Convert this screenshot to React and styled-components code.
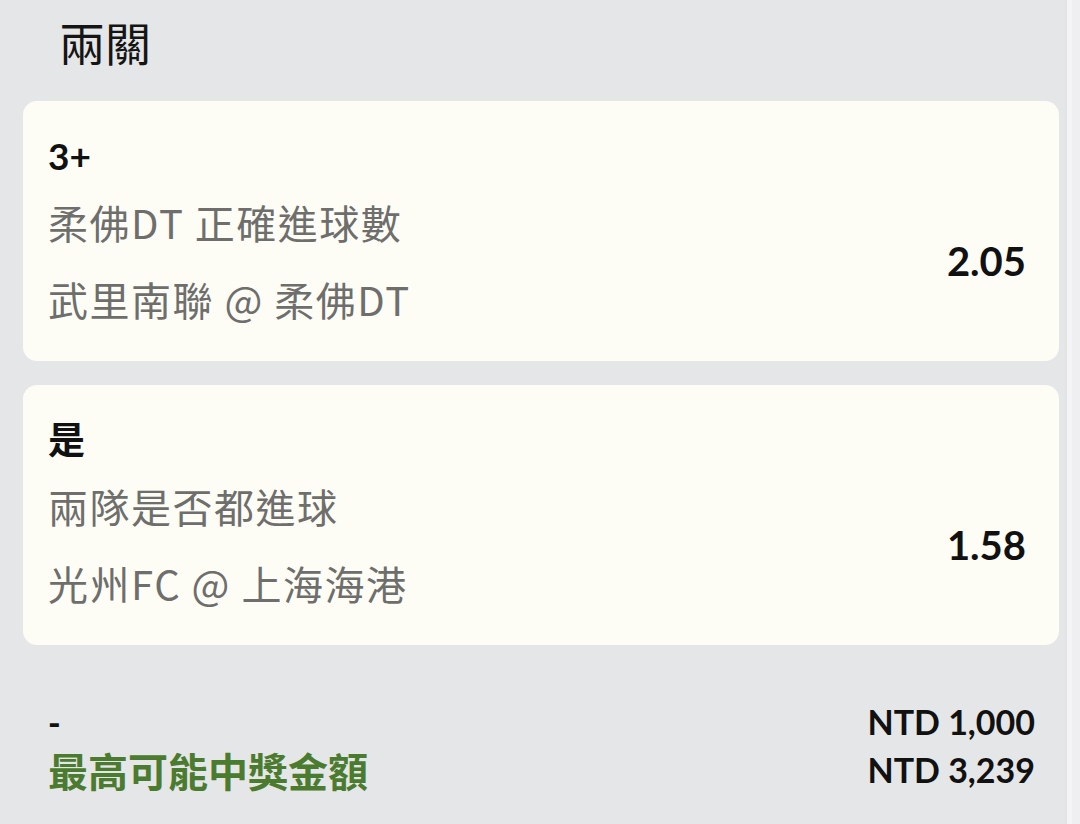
import React from "react";
import styled, { createGlobalStyle } from "styled-components";

const Global = createGlobalStyle`
  html, body { margin: 0; padding: 0; background: #e5e6e8; }
  body { font-family: Lato, "Noto Sans CJK TC", sans-serif; }
`;

const Page = styled.div`
  display: flex;
  width: 1080px;
  height: 824px;
  overflow: hidden;
  background: #e5e6e8;
`;

const Main = styled.div`
  flex: 1;
  display: flex;
  flex-direction: column;
  padding: 0 6px 0 23px;
`;

const Track = styled.div`
  width: 15px;
  flex-shrink: 0;
  background: linear-gradient(90deg, #e2e3e5 0 2px, #f4f4f6 2px 7px, #efeff1 7px);
`;

const Title = styled.h1`
  margin: 0;
  padding: 13px 0 0 36px;
  height: 101px;
  box-sizing: border-box;
  font-family: "Noto Sans CJK TC", sans-serif;
  font-weight: 400;
  font-size: 46px;
  line-height: 56px;
  color: #151515;
`;

const Card = styled.div`
  display: flex;
  flex-direction: column;
  height: 260px;
  box-sizing: border-box;
  padding: 27px 33px 0 25px;
  margin-bottom: 24px;
  background: #fdfdf6;
  border-radius: 14px;
`;

const Selection = styled.div`
  font-family: Lato, "Noto Sans CJK TC", sans-serif;
  font-weight: 700;
  font-size: 37px;
  line-height: 56px;
  color: #111;
`;

const Body = styled.div`
  display: flex;
  align-items: center;
  justify-content: space-between;
`;

const Details = styled.div`
  display: flex;
  flex-direction: column;
`;

const Detail = styled.div`
  font-family: "Noto Sans CJK TC", sans-serif;
  font-weight: 400;
  font-size: 40px;
  letter-spacing: 1.5px;
  line-height: 56px;
  color: #6e6e6c;
  margin-top: ${(p) => p.$gap}px;
`;

const Odds = styled.div`
  font-family: Lato, sans-serif;
  font-weight: 700;
  font-size: 40px;
  color: #111;
  padding-top: 10px;
`;

const Summary = styled.div`
  display: grid;
  grid-template-columns: 1fr auto;
  padding: 29px 24px 0 25px;
`;

const Dash = styled.div`
  font-family: Lato, sans-serif;
  font-weight: 900;
  font-size: 34px;
  line-height: 48px;
  color: #111;
`;

const Label = styled.div`
  font-family: "Noto Sans CJK TC", sans-serif;
  font-weight: 700;
  font-size: 40px;
  line-height: 48px;
  color: #4b7b2f;
`;

const Amount = styled.div`
  font-family: Lato, sans-serif;
  font-weight: 700;
  font-size: 34px;
  line-height: 48px;
  color: #111;
  text-align: right;
`;

const legs = [
  { sel: "3+", market: "柔佛DT 正確進球數", match: "武里南聯 @ 柔佛DT", odds: "2.05" },
  { sel: "是", market: "兩隊是否都進球", match: "光州FC @ 上海海港", odds: "1.58" },
];

export default function App() {
  return (
    <Page>
      <Global />
      <Main>
        <Title>兩關</Title>
        {legs.map((l) => (
          <Card key={l.sel}>
            <Selection>{l.sel}</Selection>
            <Body>
              <Details>
                <Detail $gap={10}>{l.market}</Detail>
                <Detail $gap={21}>{l.match}</Detail>
              </Details>
              <Odds>{l.odds}</Odds>
            </Body>
          </Card>
        ))}
        <Summary>
          <Dash>-</Dash>
          <Amount>NTD 1,000</Amount>
          <Label>最高可能中獎金額</Label>
          <Amount>NTD 3,239</Amount>
        </Summary>
      </Main>
      <Track />
    </Page>
  );
}
